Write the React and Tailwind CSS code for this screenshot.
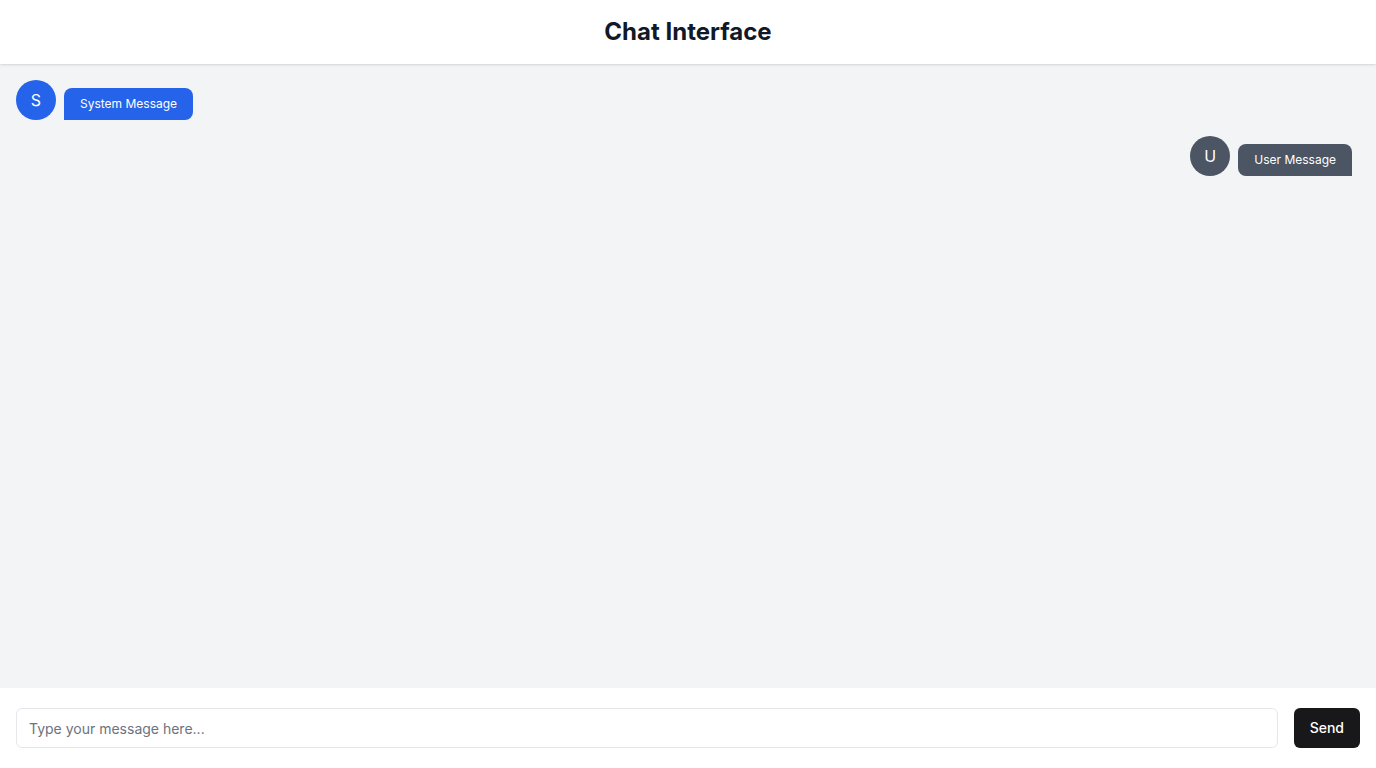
import React, { useState } from 'react'

const messages = [
  { id: 1, role: 'system', text: 'System Message' },
  { id: 2, role: 'user', text: 'User Message' },
]

function MessageRow({ msg }) {
  const isUser = msg.role === 'user'
  return (
    <div className={isUser ? 'flex items-end justify-end gap-2 pr-2' : 'flex items-end gap-2'}>
      <div
        className={`w-10 h-10 rounded-full flex items-center justify-center text-white text-base ${
          isUser ? 'bg-[#4b5563]' : 'bg-[#2563eb]'
        }`}
      >
        {isUser ? 'U' : 'S'}
      </div>
      <div
        className={`px-4 py-2 text-xs text-white rounded-lg ${
          isUser ? 'bg-[#4b5563] rounded-br-none' : 'bg-[#2563eb] rounded-bl-none'
        }`}
      >
        {msg.text}
      </div>
    </div>
  )
}

export default function App() {
  const [draft, setDraft] = useState('')

  return (
    <div className="h-screen flex flex-col bg-[#f3f4f6] font-['Inter',sans-serif]">
      <header className="bg-white shadow py-4 text-center z-10">
        <h1 className="text-2xl font-bold text-[#111827]">Chat Interface</h1>
      </header>

      <main className="flex-1 overflow-y-auto p-4 flex flex-col gap-4">
        {messages.map((m) => (
          <MessageRow key={m.id} msg={m} />
        ))}
      </main>

      <footer className="bg-white px-4 py-5 flex gap-4">
        <input
          value={draft}
          onChange={(e) => setDraft(e.target.value)}
          placeholder="Type your message here..."
          className="flex-1 h-10 px-3 border border-[#e5e7eb] rounded-md text-sm text-[#111827] placeholder:text-[#6b7280] outline-none"
        />
        <button className="h-10 px-4 rounded-md bg-[#18181b] text-white text-sm font-medium">
          Send
        </button>
      </footer>
    </div>
  )
}
